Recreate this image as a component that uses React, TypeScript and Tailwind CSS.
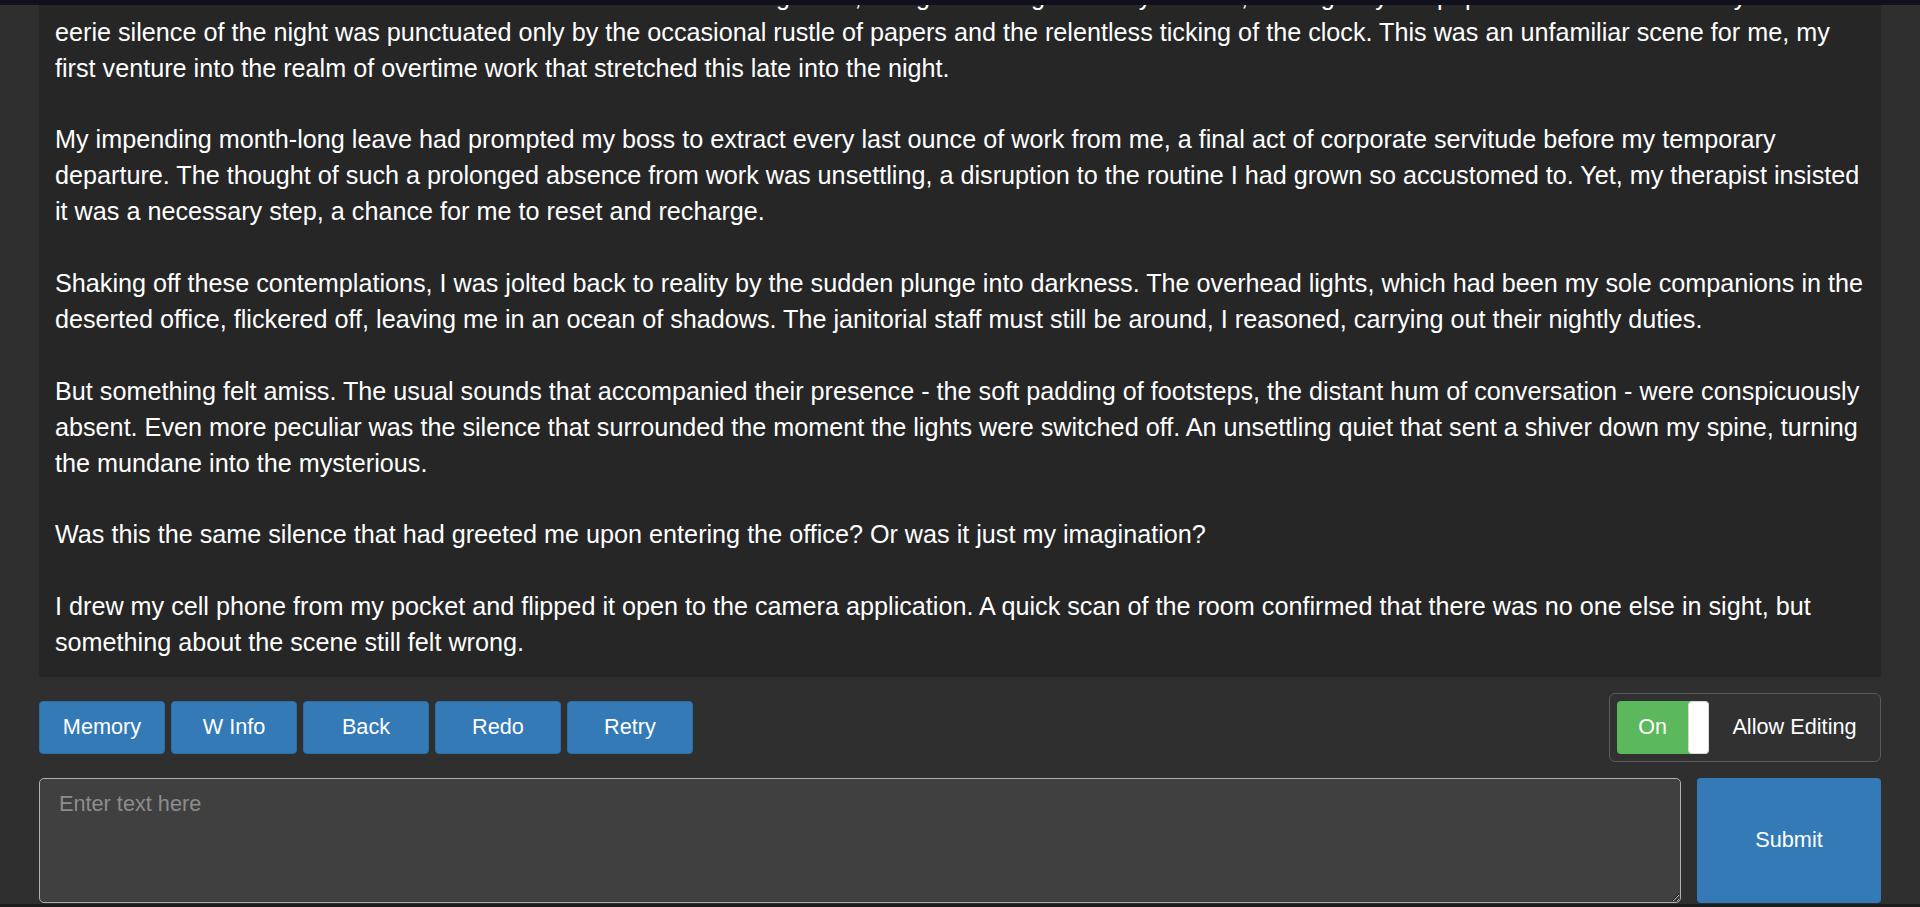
import { useLayoutEffect, useRef } from "react";

const story = [
  "It was 11:52 PM when I finally looked up from my screen. The office had long since emptied out, the last of my colleagues having trickled out hours ago with tired waves and half-hearted promises to see me tomorrow.",
  "The hum of the servers in the back room had faded into the background, along with the glow of my monitor, leaving only the papers scattered across my desk. The\neerie silence of the night was punctuated only by the occasional rustle of papers and the relentless ticking of the clock. This was an unfamiliar scene for me, my first venture into the realm of overtime work that stretched this late into the night.",
  "My impending month-long leave had prompted my boss to extract every last ounce of work from me, a final act of corporate servitude before my temporary departure. The thought of such a prolonged absence from work was unsettling, a disruption to the routine I had grown so accustomed to. Yet, my therapist insisted it was a necessary step, a chance for me to reset and recharge.",
  "Shaking off these contemplations, I was jolted back to reality by the sudden plunge into darkness. The overhead lights, which had been my sole companions in the deserted office, flickered off, leaving me in an ocean of shadows. The janitorial staff must still be around, I reasoned, carrying out their nightly duties.",
  "But something felt amiss. The usual sounds that accompanied their presence - the soft padding of footsteps, the distant hum of conversation - were conspicuously absent. Even more peculiar was the silence that surrounded the moment the lights were switched off. An unsettling quiet that sent a shiver down my spine, turning the mundane into the mysterious.",
  "Was this the same silence that had greeted me upon entering the office? Or was it just my imagination?",
  "I drew my cell phone from my pocket and flipped it open to the camera application. A quick scan of the room confirmed that there was no one else in sight, but something about the scene still felt wrong.",
].join("\n\n");

const actions = ["Memory", "W Info", "Back", "Redo", "Retry"];

function ActionButton({ label }: Readonly<{ label: string }>) {
  return (
    <button
      type="button"
      className="flex h-[53px] w-[126px] items-center justify-center rounded-[4px] border border-[#2e6da4] bg-[#337ab7] text-[21.7px] text-white"
    >
      {label}
    </button>
  );
}

function EditToggle() {
  return (
    <div className="flex h-[69px] w-[272px] items-center rounded-md border border-[#5a5a5a] bg-[#313131] pl-[7px]">
      <div className="flex h-[53px] w-[92px] items-stretch rounded-[4px] bg-[#5cb85c]">
        <span className="flex flex-1 items-center justify-center text-[21.5px] text-white">On</span>
        <span className="w-[21px] rounded-[4px] border border-[#d8d8d8] bg-white" />
      </div>
      <span className="flex-1 text-center text-[21.7px] text-white">Allow Editing</span>
    </div>
  );
}

export default function App() {
  const logRef = useRef<HTMLDivElement>(null);

  // keep the story scrolled to the newest text
  useLayoutEffect(() => {
    const el = logRef.current;
    if (el) {
      el.scrollTop = el.scrollHeight;
    }
  }, []);

  return (
    <div className="flex h-screen flex-col bg-[#2f2f2f] font-['Liberation_Sans',Arial,sans-serif]">
      <div className="h-[5px] shrink-0 bg-[#11111b]" />
      <main className="flex min-h-0 flex-1 flex-col gap-4 px-[39px] pb-px">
        <div
          ref={logRef}
          className="min-h-0 flex-1 overflow-y-auto whitespace-pre-wrap bg-[#262626] pb-4 pl-4 pr-3 text-[25.2px] leading-[35.9px] text-white [scrollbar-width:none]"
        >
          {story}
        </div>

        <div className="flex items-center justify-between">
          <div className="flex gap-[6px]">
            {actions.map((label) => (
              <ActionButton key={label} label={label} />
            ))}
          </div>
          <EditToggle />
        </div>

        <div className="flex h-[125px] shrink-0 gap-4">
          <textarea
            placeholder="Enter text here"
            className="h-full flex-1 rounded-[5px] border border-[#b0b0b0] bg-[#404040] px-[19px] pb-[12px] pt-[9px] text-[21.7px] text-white outline-none placeholder:text-[#8c8c8c]"
          />
          <button
            type="button"
            className="h-full w-[184px] rounded-[4px] bg-[#337ab7] text-[21.7px] text-white"
          >
            Submit
          </button>
        </div>
      </main>
      <div className="h-[3px] shrink-0 bg-[#1c1c1c]" />
    </div>
  );
}
